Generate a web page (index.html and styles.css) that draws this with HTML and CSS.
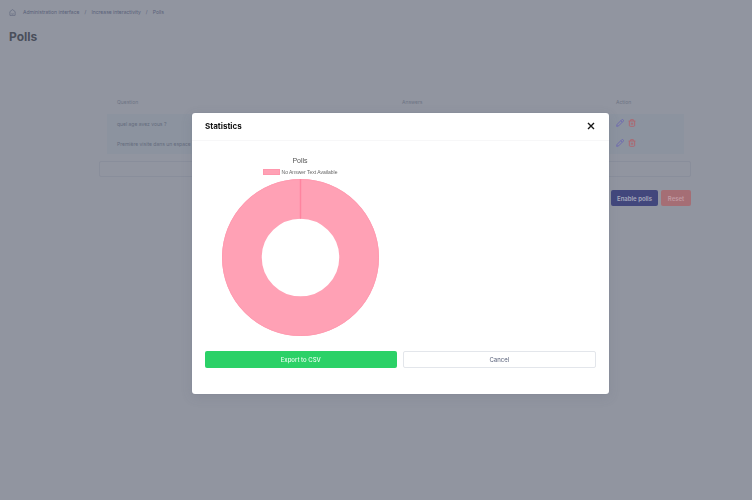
FILE: index.html
```html
<!DOCTYPE html>
<html lang="en">
<head>
<meta charset="utf-8">
<title>Polls</title>
<link rel="stylesheet" href="styles.css">
</head>
<body>
<svg class="sprite" aria-hidden="true">
  <symbol id="pencil" viewBox="0 0 24 24"><path d="M2 22l1.500-6L17 2.500a2.500 2.500 0 0 1 4.500 4.500L8 20.500zM14.500 5l4.500 4.500"/></symbol>
  <symbol id="trash" viewBox="0 0 24 24"><path d="M2 6h20M8 6V2h8v4M4 6v13a3 3 0 0 0 3 3h10a3 3 0 0 0 3-3V6M10 11v6M14 11v6"/></symbol>
</svg>
<div class="page">
  <nav class="crumbs" aria-label="Breadcrumb">
    <a href="#" aria-label="Home"><svg class="home" viewBox="0 0 24 24"><path d="M3 9l9-7 9 7v12a1 1 0 0 1-1 1H4a1 1 0 0 1-1-1zM8 16c2 2 6 2 8 0"/></svg></a>
    <a href="#">Administration interface</a><span class="sep">/</span>
    <a href="#">Increase interactivity</a><span class="sep">/</span>
    <a href="#">Polls</a>
  </nav>
  <h1>Polls</h1>
  <main>
    <table>
      <thead><tr><th class="wide">Question</th><th class="mid">Answers</th><th>Action</th></tr></thead>
      <tbody>
        <tr><td>quel age avez vous ?</td><td></td><td><div class="actions"><button aria-label="Edit"><svg class="edit"><use href="#pencil"/></svg></button><button aria-label="Delete"><svg class="delete"><use href="#trash"/></svg></button></div></td></tr>
        <tr><td>Première visite dans un espace ?</td><td></td><td><div class="actions"><button aria-label="Edit"><svg class="edit"><use href="#pencil"/></svg></button><button aria-label="Delete"><svg class="delete"><use href="#trash"/></svg></button></div></td></tr>
      </tbody>
    </table>
    <button class="add" aria-label="Add"></button>
    <div class="page-buttons"><button class="enable">Enable polls</button><button class="reset">Reset</button></div>
  </main>
</div>
<div class="overlay">
  <section class="modal" role="dialog" aria-modal="true" aria-labelledby="dialog-title">
    <header>
      <h2 id="dialog-title">Statistics</h2>
      <button class="close" aria-label="Close"><svg viewBox="0 0 8 8"><path d="M1 1l6 6M7 1L1 7"/></svg></button>
    </header>
    <div class="content">
      <figure>
        <figcaption>Polls</figcaption>
        <div class="legend"><span class="swatch"></span>No Answer Text Available</div>
        <svg class="chart" viewBox="0 0 158 158" role="img" aria-label="Polls"><circle cx="79" cy="79" r="59" fill="none" stroke="#ffa1b5" stroke-width="40"/><circle cx="79" cy="79" r="78.500" fill="none" stroke="#ff9bb0" stroke-width="1"/><path d="M79 0v40" stroke="#ff849f" stroke-width="1.500"/></svg>
      </figure>
      <div class="modal-buttons"><button class="export">Export to CSV</button><button class="cancel">Cancel</button></div>
    </div>
  </section>
</div>
</body>
</html>
```
FILE: styles.css
```css
* { box-sizing: border-box; }
body { margin: 0; min-height: 100vh; background: #9195a0; font-family: Inter, sans-serif; color: #6d7484; }
button { margin: 0; padding: 0; border: 0; background: none; font: inherit; color: inherit; }
h1, h2, figure { margin: 0; }
svg { display: block; fill: none; stroke: currentColor; stroke-width: 2; }
.sprite { position: absolute; width: 0; height: 0; }
.page { padding: 7px 9px; }
.crumbs { display: flex; align-items: center; height: 10px; font-size: 5px; font-weight: 400; color: #596179; }
.crumbs a { color: inherit; text-decoration: none; }
.home { width: 7px; height: 7px; margin-right: 7px; }
.sep { width: 12px; text-align: center; }
h1 { margin-top: 12px; font-size: 12px; line-height: 16px; font-weight: 700; color: #4a4f5b; }
main { margin: 52px 52px 0 90px; }
table { width: calc(100% - 15px); margin-left: 8px; border-collapse: collapse; table-layout: fixed; font-size: 5px; line-height: 6px; }
th, td { padding: 0 10px; text-align: left; font-weight: 400; }
th { height: 17px; padding-bottom: 7px; }
.wide { width: 285px; }
.mid { width: 214px; }
td { height: 20px; color: #646c7d; }
td:last-child { padding-bottom: 2px; }
tbody { background: #8c939f; }
.actions { display: flex; gap: 4px; }
.actions svg { width: 8px; height: 8px; stroke-width: 3; }
.edit { color: #6f6bb0; }
.delete { color: #ac6871; }
.add { display: block; width: 100%; height: 16px; margin-top: 7px; border: 1px solid #898e9b; border-radius: 2px; }
.page-buttons { display: flex; justify-content: flex-end; gap: 3px; margin-top: 13px; font-size: 6px; font-weight: 600; }
.page-buttons button { height: 16px; border-radius: 2px; color: #a7aabd; }
.page-buttons .enable { width: 47px; background: #42477c; }
.page-buttons .reset { width: 30px; background: #a56e75; color: #c19ba3; }
.overlay { position: fixed; inset: 0; display: flex; align-items: center; justify-content: center; padding: 6px 0 0 49px; }
.modal { width: 417px; padding-bottom: 26px; background: #fff; border-radius: 3px; box-shadow: 0 0 1px #73798a, 0 3px 12px rgba(80, 85, 105, .15); }
.modal header { display: flex; align-items: center; justify-content: space-between; height: 28px; padding: 0 14px 0 13px; border-bottom: 1px solid #f7f7f8; }
h2 { font-size: 8px; line-height: 12px; font-weight: 700; color: #111; }
.close svg { width: 8px; height: 8px; color: #181818; stroke-width: 1.4; }
.content { padding: 15px 13px 0; }
figure { display: flex; flex-direction: column; align-items: center; width: 190px; font-family: "Liberation Sans", Arial, sans-serif; }
figcaption { font-size: 7px; line-height: 10px; color: #555; }
.legend { display: flex; align-items: center; gap: 2px; height: 7px; margin: 3px 0; font-size: 5px; color: #666; }
.swatch { width: 17px; height: 6px; background: #ffa1b5; border: 1px solid #ff97ad; }
.chart { width: 157px; height: 157px; }
.modal-buttons { display: flex; gap: 6px; margin-top: 15px; font-size: 6px; font-weight: 400; }
.modal-buttons button { flex: 1; height: 17px; border-radius: 2px; }
.modal-buttons .export { background: #2bd167; color: #e9fff0; font-weight: 500; }
.modal-buttons .cancel { border: 1px solid #e3e6eb; color: #59617a; }
```
